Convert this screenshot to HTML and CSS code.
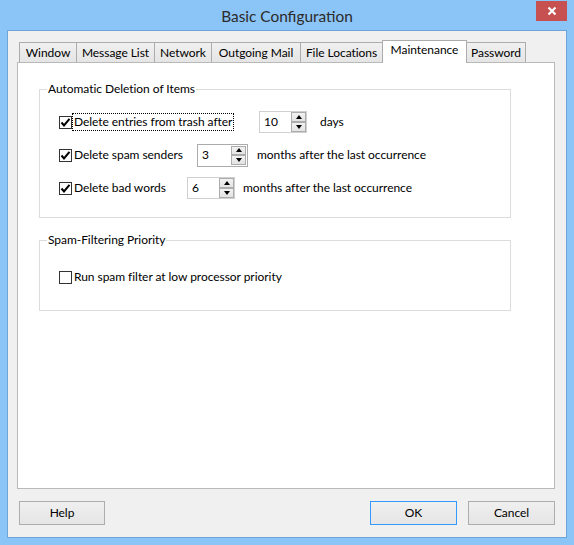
FILE: index.html
```html
<!DOCTYPE html>
<html>
<head>
<meta charset="utf-8">
<link rel="stylesheet" href="styles.css">
</head>
<body>
<div class="window">
  <div class="titlebar">
    <div class="title">Basic Configuration</div>
    <div class="close">
      <svg width="10" height="10" viewBox="0 0 10 10"><path d="M1.5 1.5 L8.5 8.5 M8.5 1.5 L1.5 8.5" stroke="#fff" stroke-width="2.2" fill="none"/></svg>
    </div>
  </div>
  <div class="client">
    <div class="tabs">
      <div class="tab t-window">Window</div>
      <div class="tab t-msg">Message List</div>
      <div class="tab t-net">Network</div>
      <div class="tab t-out">Outgoing Mail</div>
      <div class="tab t-file">File Locations</div>
      <div class="tab t-maint selected">Maintenance</div>
      <div class="tab t-pass">Password</div>
    </div>
    <div class="panel">
      <fieldset class="group">
        <legend>Automatic Deletion of Items</legend>
        <div class="rows rows-auto">
          <div class="row">
            <span class="check"><svg width="11" height="11" viewBox="0 0 11 11"><path d="M1.5 5.5 L4 8.5 L9.5 1.8" stroke="#000" stroke-width="2" fill="none"/></svg></span>
            <span class="label focus l-trash">Delete entries from trash after</span>
            <span class="spin s-trash"><span class="val">10</span><span class="arrows"><span class="arr"><span class="tri-up"></span></span><span class="arr"><span class="tri-down"></span></span></span></span>
            <span class="unit u-days">days</span>
          </div>
          <div class="row">
            <span class="check"><svg width="11" height="11" viewBox="0 0 11 11"><path d="M1.5 5.5 L4 8.5 L9.5 1.8" stroke="#000" stroke-width="2" fill="none"/></svg></span>
            <span class="label l-spam">Delete spam senders</span>
            <span class="spin s-spam"><span class="val">3</span><span class="arrows"><span class="arr"><span class="tri-up"></span></span><span class="arr"><span class="tri-down"></span></span></span></span>
            <span class="unit u-spam">months after the last occurrence</span>
          </div>
          <div class="row">
            <span class="check"><svg width="11" height="11" viewBox="0 0 11 11"><path d="M1.5 5.5 L4 8.5 L9.5 1.8" stroke="#000" stroke-width="2" fill="none"/></svg></span>
            <span class="label l-bad">Delete bad words</span>
            <span class="spin s-bad"><span class="val">6</span><span class="arrows"><span class="arr"><span class="tri-up"></span></span><span class="arr"><span class="tri-down"></span></span></span></span>
            <span class="unit u-bad">months after the last occurrence</span>
          </div>
        </div>
      </fieldset>
      <fieldset class="group group-spam">
        <legend>Spam-Filtering Priority</legend>
        <div class="rows rows-spam">
          <div class="row">
            <span class="check"></span>
            <span class="label">Run spam filter at low processor priority</span>
          </div>
        </div>
      </fieldset>
    </div>
    <div class="buttons">
      <div class="btn btn-help">Help</div>
      <div class="spacer"></div>
      <div class="btn btn-default">OK</div>
      <div class="btn">Cancel</div>
    </div>
  </div>
</div>
</body>
</html>
```
FILE: styles.css
```css
* { box-sizing: border-box; }
html, body { margin: 0; padding: 0; }
body {
  width: 574px;
  height: 545px;
  overflow: hidden;
  font-family: Lato, "Noto Sans", sans-serif;
  font-size: 12px;
  letter-spacing: -0.05px;
  color: #000;
}
.window {
  width: 574px;
  height: 545px;
  background: #8bc4f6;
  display: flex;
  flex-direction: column;
}
.titlebar {
  height: 30px;
  display: grid;
  grid-template-columns: 1fr auto 1fr;
  align-items: start;
}
.title {
  grid-column: 2;
  font-size: 15.4px;
  letter-spacing: 0;
  line-height: 20px;
  padding-top: 6px;
  color: #2b2b2b;
}
.close {
  grid-column: 3;
  justify-self: end;
  width: 31px;
  height: 20px;
  margin-right: 7px;
  margin-top: 1px;
  background: #c75050;
  display: flex;
  align-items: center;
  justify-content: center;
}
.client {
  margin-left: 7px;
  width: 560px;
  height: 508px;
  background: #f0f0f0;
  border: 1px solid #6ea4d6;
  padding: 9px 11px 0 9px;
  display: flex;
  flex-direction: column;
}
.tabs {
  height: 22px;
  display: flex;
  align-items: flex-end;
  padding-left: 2px;
}
.tab {
  height: 20px;
  border: 1px solid #acacac;
  border-bottom: none;
  background: linear-gradient(#f0f0f0, #e5e5e5);
  text-align: center;
  line-height: 19px;
  margin-left: -1px;
  white-space: nowrap;
}
.tab:first-child { margin-left: 0; }
.t-window { width: 58px; }
.t-msg { width: 79px; }
.t-net { width: 58px; }
.t-out { width: 90px; }
.t-file { width: 83px; }
.t-maint { width: 85px; }
.t-pass { width: 60px; }
.tab.selected {
  height: 23px;
  margin-bottom: -1px;
  background: #fff;
  position: relative;
  z-index: 1;
  line-height: 18px;
}
.panel {
  width: 538px;
  height: 427px;
  background: #fff;
  border: 1px solid #b9b9b9;
  padding: 18px 0 0 21px;
}
.group {
  width: 472px;
  margin: 0;
  padding: 0 0 0 19px;
  border: 1px solid #dcdcdc;
  min-width: 0;
}
.group legend {
  margin-left: -12px;
  padding: 0 1px;
  line-height: 16px;
  color: #000;
}
.group-spam { margin-top: 14px; }
.rows { display: flex; flex-direction: column; gap: 11px; }
.rows-auto { padding: 14px 0 18px 0; }
.rows-spam { padding: 18px 0 22px 0; }
.row {
  height: 22px;
  display: flex;
  align-items: center;
  white-space: nowrap;
}
.check {
  width: 13px;
  height: 13px;
  border: 1px solid #333;
  background: #fff;
  display: flex;
  align-items: center;
  justify-content: center;
  flex: none;
}
.label {
  border: 1px dotted transparent;
  padding: 0 1px;
  line-height: 16px;
  flex: none;
}
.label.focus { border-color: #000; }
.l-trash { width: 162px; }
.l-spam { width: 125px; }
.l-bad { width: 115px; }
.spin {
  height: 22px;
  border: 1px solid #d0d0d0;
  background: #fff;
  display: flex;
  align-items: stretch;
  justify-content: space-between;
  flex: none;
}
.s-trash { width: 48px; margin-left: 25px; }
.s-spam { width: 51px; height: 23px; border-color: #ababab; }
.s-bad { width: 48px; }
.val {
  padding-left: 4px;
  line-height: 19px;
}
.arrows {
  width: 15px;
  display: flex;
  flex-direction: column;
}
.s-spam .arrows { margin: 1px 1px 1px 0; }
.arr {
  flex: 1;
  border: 1px solid #acacac;
  background: linear-gradient(#f2f2f2, #e3e3e3);
  display: flex;
  align-items: center;
  justify-content: center;
}
.tri-up {
  width: 0; height: 0;
  border-left: 3.5px solid transparent;
  border-right: 3.5px solid transparent;
  border-bottom: 4px solid #000;
}
.tri-down {
  width: 0; height: 0;
  border-left: 3.5px solid transparent;
  border-right: 3.5px solid transparent;
  border-top: 4px solid #000;
}
.unit { line-height: 16px; }
.u-days { margin-left: 13px; }
.u-spam { margin-left: 9px; }
.u-bad { margin-left: 8px; }
.buttons {
  margin-top: 12px;
  width: 538px;
  display: flex;
  gap: 11px;
}
.spacer { flex: 1; }
.btn {
  width: 87px;
  height: 24px;
  border: 1px solid #adadad;
  background: linear-gradient(#f0f0f0, #e5e5e5);
  text-align: center;
  line-height: 21px;
}
.btn-help { width: 86px; margin-left: 2px; }
.btn-default { border-color: #3399ff; }
```
